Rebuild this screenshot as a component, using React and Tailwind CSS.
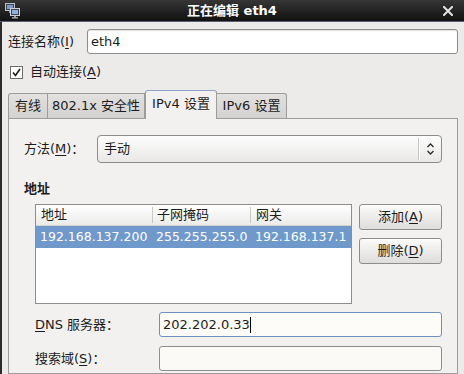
import React from "react";

function NetIcon() {
  return (
    <svg width="17" height="17" viewBox="0 0 17 17">
      <rect x="1.5" y="1.5" width="9" height="7" fill="#3a4658" stroke="#b8c0cc" strokeWidth="1" />
      <rect x="3" y="3" width="6" height="4" fill="#7f9cc0" />
      <rect x="5" y="9" width="2" height="2" fill="#9aa4b0" />
      <rect x="6.5" y="6.5" width="9" height="7" fill="#3a4658" stroke="#c8d0da" strokeWidth="1" />
      <rect x="8" y="8" width="6" height="4" fill="#8fb0d8" />
      <rect x="10" y="14" width="2" height="1.5" fill="#9aa4b0" />
      <rect x="8" y="15.2" width="6" height="1.3" fill="#b0b8c2" />
    </svg>
  );
}

function CloseX() {
  return (
    <svg width="10" height="10" viewBox="0 0 10 10">
      <path d="M1 1 L9 9 M9 1 L1 9" stroke="#e4e4e4" strokeWidth="2" strokeLinecap="square" />
    </svg>
  );
}

function U({ children }) {
  return <span className="underline underline-offset-[2px] decoration-[1px]">{children}</span>;
}

function Button({ children }) {
  return (
    <div className="h-[26px] w-[83px] flex items-center justify-center rounded-[3px] border border-[#8d8d8d] bg-gradient-to-b from-[#fbfbfa] to-[#dedddb] shadow-[inset_0_1px_0_#ffffff]">
      {children}
    </div>
  );
}

export default function App() {
  return (
    <div className="w-[464px] h-[374px] overflow-hidden bg-[#ecebea] font-['DejaVu_Sans','Noto_Sans_CJK_SC',sans-serif] text-[13px] text-[#1c1c1c] flex flex-col">
      {/* title bar */}
      <div className="h-[21px] shrink-0 bg-gradient-to-b from-[#363636] to-[#121212] flex items-center">
        <div className="w-[24px] pl-[4px] flex items-center">
          <NetIcon />
        </div>
        <div className="flex-1 text-center text-white font-bold text-[13px] leading-none">正在编辑 eth4</div>
        <div className="w-[24px] flex items-center justify-start pl-[3px]">
          <CloseX />
        </div>
      </div>
      <div className="h-[1px] shrink-0 bg-[#586072]" />

      {/* body */}
      <div className="flex-1 flex flex-col border-l-2 border-[#2c2c2c] pl-[6px]">
        {/* connection name */}
        <div className="mt-[7px] h-[25px] flex items-center">
          <div className="w-[79px] whitespace-nowrap">连接名称(<U>I</U>)</div>
          <div className="w-[371px] h-[25px] border border-[#8e8e8e] rounded-[3px] bg-white pl-[3px] flex items-center shadow-[inset_0_1px_1px_rgba(0,0,0,0.12)]">
            eth4
          </div>
        </div>

        {/* auto connect */}
        <div className="mt-[8px] h-[20px] flex items-center">
          <div className="ml-[2px] w-[13px] h-[13px] border border-[#6a6a6a] bg-white flex items-center justify-center">
            <svg width="9" height="9" viewBox="0 0 9 9">
              <path d="M1 4.5 L3.5 7.5 L8 1" stroke="#1a1a1a" strokeWidth="1.6" fill="none" />
            </svg>
          </div>
          <div className="ml-[7px]">自动连接(<U>A</U>)</div>
        </div>

        {/* tabs */}
        <div className="mt-[8px] h-[28px] flex items-end">
          <div className="w-[40px] h-[25px] border border-b-0 border-[#9c9c9a] rounded-tl-[3px] bg-gradient-to-b from-[#e2e1df] to-[#d3d2d0] flex items-center justify-center">
            有线
          </div>
          <div className="w-[97px] h-[25px] border border-l-0 border-b-0 border-[#9c9c9a] bg-gradient-to-b from-[#e2e1df] to-[#d3d2d0] flex items-center justify-center whitespace-nowrap">
            802.1x 安全性
          </div>
          <div className="relative z-10 w-[72px] h-[29px] -mb-[1px] border border-b-0 border-[#9c9c9a] border-t-[#8ea4c6] rounded-t-[3px] bg-[#f2f1f0] flex items-center justify-center whitespace-nowrap pb-[2px]">
            IPv4 设置
          </div>
          <div className="w-[70px] h-[25px] border border-l-0 border-b-0 border-[#9c9c9a] rounded-tr-[3px] bg-gradient-to-b from-[#e2e1df] to-[#d3d2d0] flex items-center justify-center whitespace-nowrap">
            IPv6 设置
          </div>
        </div>

        {/* panel */}
        <div className="flex-1 mr-[6px] border border-[#9c9c9a] bg-[#f2f1f0] px-[15px] pt-[16px] flex flex-col">
          {/* method */}
          <div className="h-[28px] flex items-center">
            <div className="w-[73px] whitespace-nowrap">方法(<U>M</U>)：</div>
            <div className="flex-1 h-[28px] border border-[#8c8c8c] rounded-[4px] bg-gradient-to-b from-[#fdfdfd] to-[#e9e8e6] flex items-center">
              <div className="flex-1 pl-[6px]">手动</div>
              <div className="w-[1px] h-[22px] bg-[#c4c4c2] border-r border-white box-content" />
              <div className="w-[21px] flex items-center justify-center">
                <svg width="9" height="14" viewBox="0 0 9 14">
                  <path d="M1.5 5 L4.5 2 L7.5 5 M1.5 9 L4.5 12 L7.5 9" stroke="#2a2a2a" strokeWidth="1.3" fill="none" />
                </svg>
              </div>
            </div>
          </div>

          {/* address heading */}
          <div className="mt-[18px] h-[16px] leading-[16px] font-bold">地址</div>

          {/* table + buttons */}
          <div className="mt-[7px] ml-[11px] flex">
            <div className="w-[318px] h-[100px] border border-[#8e8e8e] bg-white flex flex-col">
              <div className="h-[21px] flex bg-gradient-to-b from-white to-[#ebebea] border-b border-[#d2d2d0]">
                <div className="w-[116px] pl-[5px] flex items-center">地址</div>
                <div className="w-[98px] pl-[4px] flex items-center border-l border-[#c8c8c6] my-[2px]">子网掩码</div>
                <div className="flex-1 pl-[5px] flex items-center border-l border-[#c8c8c6] my-[2px]">网关</div>
              </div>
              <div className="h-[22px] flex bg-[#7099cb] text-white text-[12.5px] whitespace-nowrap">
                <div className="w-[116px] pl-[4px] flex items-center">192.168.137.200</div>
                <div className="w-[98px] pl-[4px] flex items-center">255.255.255.0</div>
                <div className="flex-1 pl-[5px] flex items-center">192.168.137.1</div>
              </div>
            </div>
            <div className="ml-[7px] flex flex-col gap-[8px]">
              <Button>添加(<U>A</U>)</Button>
              <Button>删除(<U>D</U>)</Button>
            </div>
          </div>

          {/* DNS */}
          <div className="mt-[8px] ml-[11px] h-[25px] flex items-center">
            <div className="w-[124px] whitespace-nowrap"><U>D</U>NS 服务器：</div>
            <div className="flex-1 h-[25px] border border-[#6f8fc0] rounded-[3px] bg-[#fdfcf9] pl-[3px] flex items-center">
              202.202.0.33<span className="inline-block w-[1px] h-[16px] bg-black" />
            </div>
          </div>

          {/* search domain */}
          <div className="mt-[9px] ml-[11px] h-[25px] flex items-center">
            <div className="w-[124px] whitespace-nowrap">搜索域(<U>S</U>)：</div>
            <div className="flex-1 h-[25px] border border-[#8e8e8e] rounded-[3px] bg-[#fbfaf6]" />
          </div>
        </div>
      </div>
    </div>
  );
}
